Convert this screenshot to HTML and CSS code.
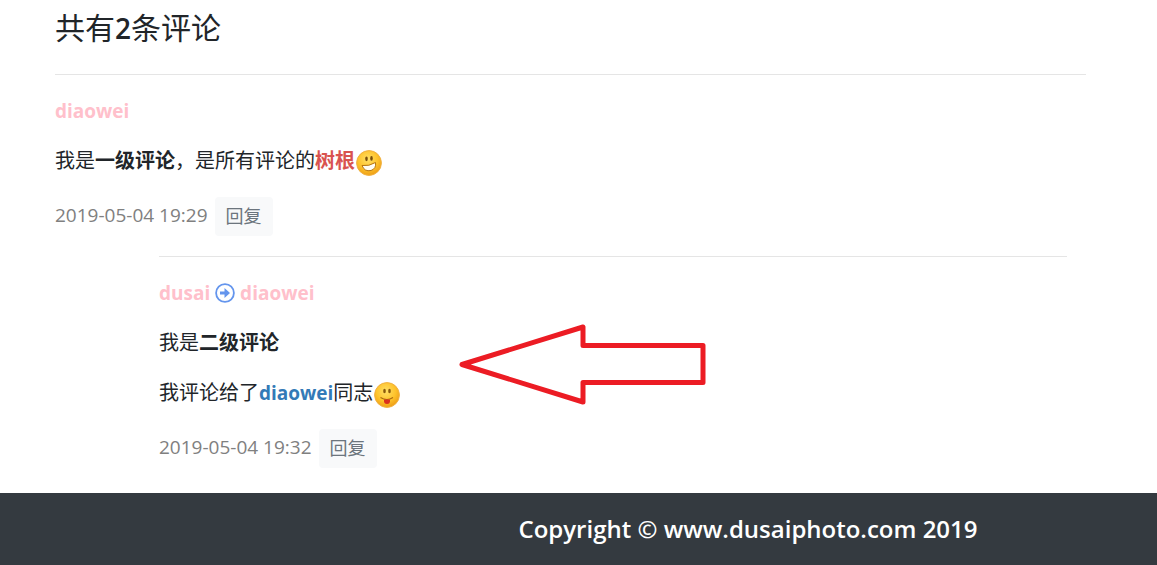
FILE: index.html
```html
<!DOCTYPE html>
<html lang="zh-CN">
<head>
<meta charset="utf-8">
<meta name="viewport" content="width=device-width, initial-scale=1">
<title>评论</title>
<link rel="stylesheet" href="styles.css">
</head>
<body>
<main class="comments">
  <h4 class="comments-title">共有<span class="count">2</span>条评论</h4>
  <article class="comment">
    <p class="author">diaowei</p>
    <p class="text">我是<strong>一级评论</strong>，是所有评论的<strong class="red">树根</strong><svg class="emoji" viewBox="0 0 26 26" role="img" aria-label="笑脸">
      <defs><radialGradient id="face" cx="45%" cy="35%" r="65%"><stop offset="0" stop-color="#ffe066"/><stop offset=".6" stop-color="#fec32c"/><stop offset="1" stop-color="#ee9f16"/></radialGradient></defs>
      <circle cx="13" cy="13" r="12.4" fill="url(#face)" stroke="#f0b040"/>
      <ellipse cx="10.500" cy="8.800" rx="1.300" ry="2.400" fill="#7a4f0c"/><ellipse cx="15.500" cy="8.400" rx="1.300" ry="2.400" fill="#7a4f0c"/>
      <path d="M6 15.500Q13 16.500 19.500 12.500Q20.500 18.500 15 20.500Q8.500 22 6 15.500Z" fill="#fffdf4" stroke="#b5740f"/>
    </svg></p>
    <div class="meta"><time class="time">2019-05-04 19:29</time><button class="reply" type="button">回复</button></div>
  </article>
  <article class="comment child">
    <p class="author">dusai <svg class="to" viewBox="0 0 20 20" aria-hidden="true"><circle cx="10" cy="10" r="8.900" fill="none" stroke="#6495ed" stroke-width="1.800"/><path d="M5 8.500H9.500V5L15 10L9.500 15V11.500H5Z" fill="#6495ed"/></svg> diaowei</p>
    <p class="text">我是<strong>二级评论</strong></p>
    <p class="text">我评论给了<strong class="blue">diaowei</strong>同志<svg class="emoji" viewBox="0 0 26 26" role="img" aria-label="吐舌">
      <circle cx="13" cy="13" r="12.400" fill="url(#face)" stroke="#f0b040"/>
      <ellipse cx="10.500" cy="9" rx="1.300" ry="2.300" fill="#8a5a0c"/><ellipse cx="15.500" cy="9" rx="1.300" ry="2.300" fill="#8a5a0c"/>
      <path d="M6.500 15.500Q13 19.500 19 15.500" fill="none" stroke="#a8690f" stroke-width="1.200"/>
      <path d="M10 17.500H16Q16.500 22 13 22Q9.500 22 10 17.500Z" fill="#d9301f"/>
    </svg></p>
    <div class="meta"><time class="time">2019-05-04 19:32</time><button class="reply" type="button">回复</button></div>
    <svg class="arrow" viewBox="0 0 248 82" aria-hidden="true"><path d="M4 41.500L125 4V22.500H245V59.500H125V79Z" fill="none" stroke="#ec1c24" stroke-width="5" stroke-linejoin="round"/></svg>
  </article>
</main>
<footer class="footer"><p class="copyright">Copyright © www.dusaiphoto.com 2019</p></footer>
</body>
</html>
```
FILE: styles.css
```css
* { box-sizing: border-box; }
body {
  margin: 0;
  background: #fff;
  color: #212529;
  font: 20px/30px "Open Sans", "Noto Sans CJK SC", sans-serif;
}
p { margin: 0; }
.comments { padding: 10px 71px 0 55px; }
.comments-title {
  margin: 0 0 28px;
  font-size: 30px;
  line-height: 36px;
  font-weight: 400;
}
.count { font-size: 28px; font-weight: 600; }
.comment {
  display: flex;
  flex-direction: column;
  gap: 20px;
  padding: 21px 0 20px;
  border-top: 1px solid #e5e5e5;
}
.child {
  position: relative;
  margin: 0 19px 0 104px;
  padding-bottom: 25px;
}
.author { color: pink; font-size: 19px; font-weight: 700; }
.text { font-weight: 400; }
.text strong { font-weight: 700; }
.text .red { color: #d9534f; }
.text .blue { color: #337ab7; font-size: 19px; }
.emoji { width: 26px; height: 26px; margin: -2px 1px; vertical-align: -6px; }
.to { width: 20px; height: 20px; vertical-align: -3px; }
.meta { display: flex; align-items: center; gap: 7px; padding-top: 1px; }
.time { color: gray; font-size: 19px; padding-bottom: 4px; }
.reply {
  height: 39px;
  padding: 0 11px;
  border: 0;
  border-radius: 4px;
  background: #f8f9fa;
  color: #6c757d;
  font: 400 18px/27px "Open Sans", "Noto Sans CJK SC", sans-serif;
}
.arrow { position: absolute; left: 299px; top: 66px; width: 248px; height: 82px; }
.footer { padding: 21px 0 21px 339px; background: #343a40; }
.copyright { color: #fff; text-align: center; font-size: 24px; font-weight: 600; }
```
